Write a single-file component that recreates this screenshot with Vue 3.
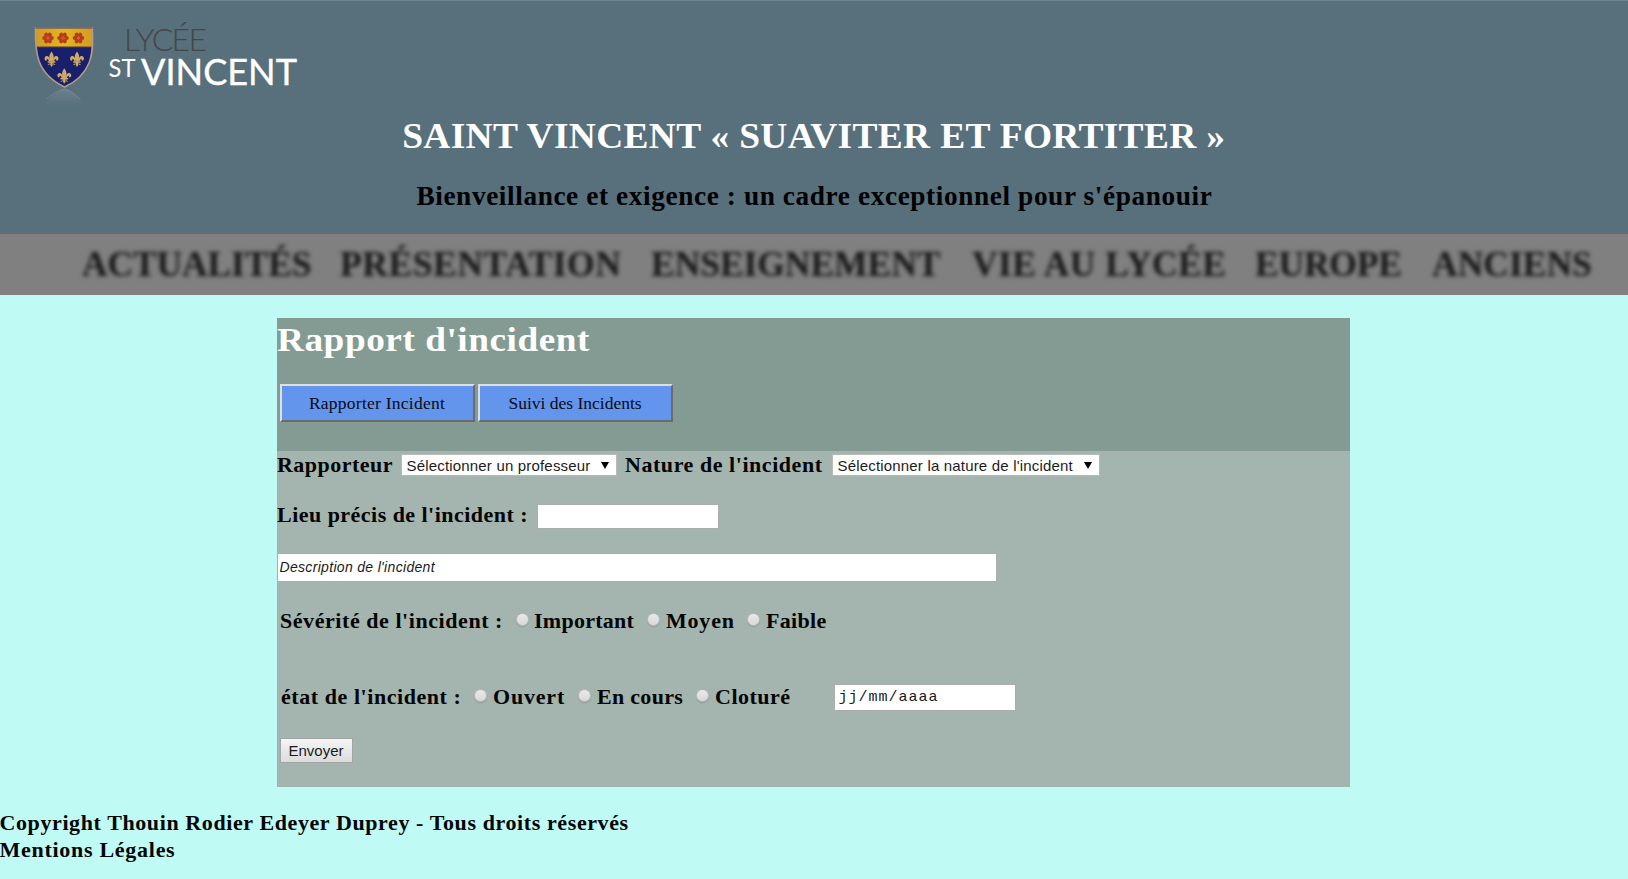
<script setup>
const nav = [
  { label: 'ACTUALITÉS', key: 'actualites' },
  { label: 'PRÉSENTATION', key: 'presentation' },
  { label: 'ENSEIGNEMENT', key: 'enseignement' },
  { label: 'VIE AU LYCÉE', key: 'vie' },
  { label: 'EUROPE', key: 'europe' },
  { label: 'ANCIENS', key: 'anciens' },
]
const flowers = [48, 63, 78.5]
const lilies = [[51.5, 59.5], [77, 59.5], [64.3, 76.3]]
const petals = [0, 60, 120, 180, 240, 300]
</script>

<template>
  <div class="page">
    <header class="header">
      <svg class="logo" width="330" height="115" viewBox="0 0 330 115">
        <defs>
          <linearGradient id="reflection" x1="0" y1="0" x2="0" y2="1">
            <stop offset="0" stop-color="#a9b8c0" stop-opacity=".6" />
            <stop offset="1" stop-color="#a9b8c0" stop-opacity="0" />
          </linearGradient>
          <linearGradient id="gold" x1="0" y1="0" x2="1" y2="0">
            <stop offset="0" stop-color="#d09a22" />
            <stop offset=".5" stop-color="#e2b71f" />
            <stop offset="1" stop-color="#d39a22" />
          </linearGradient>
          <clipPath id="shield">
            <path d="M35.5 28H92.3C93 44 92.8 54 89 63C84 75 76 82 64.5 87C52 81 43 72 39 61C35.8 52 35.2 42 35.5 28Z" />
          </clipPath>
        </defs>
        <path d="M64.5 89C57 91 49 98 43 106H84C79 98 73 91 64.5 89Z" fill="url(#reflection)" opacity=".4" />
        <path d="M47 99C52 94 57 91 64.5 89C71 91 75 94 80 99" fill="none" stroke="#9ba9af" stroke-width="1" opacity=".4" />
        <g clip-path="url(#shield)">
          <rect x="34" y="27" width="60" height="61" fill="#19206b" />
          <rect x="34" y="27" width="60" height="19.5" fill="url(#gold)" />
          <path d="M34 46.7H94" stroke="#9d762e" />
        </g>
        <path d="M35.5 28H92.3C93 44 92.8 54 89 63C84 75 76 82 64.5 87C52 81 43 72 39 61C35.8 52 35.2 42 35.5 28Z" fill="none" stroke="#b59b83" stroke-width="1.6" />
        <path d="M35.5 28H92.3" stroke="#713e29" stroke-width="1.2" />
        <g v-for="x in flowers" :key="x" :transform="`translate(${x} 38)`">
          <ellipse v-for="a in petals" :key="a" cx="0" cy="-3.5" rx="2.1" ry="2.3" :transform="`rotate(${a + 30})`" fill="#b93a20" />
          <circle r="1.4" fill="#cc5a25" />
        </g>
        <g v-for="(p, i) in lilies" :key="i" :transform="`translate(${p[0]} ${p[1]})`" fill="#d0a868">
          <path d="M0 -8C3 -4 2.5 -1 1.2 2H-1.2C-2.5 -1 -3 -4 0 -8Z" />
          <path d="M1 2C1.5 -3 5 -5 6.7 -2C7.6 0 5.8 2 4.6 .8C5.2 -1 3.2 -1 2.6 2ZM-1 2C-1.5 -3 -5 -5 -6.7 -2C-7.6 0 -5.8 2 -4.6 .8C-5.2 -1 -3.2 -1 -2.6 2Z" />
          <path d="M-3.8 1.8H3.8V3.3H-3.8ZM-1 3H1L1.3 5.5L0 7.5L-1.3 5.5ZM1.3 3.2L4.2 5.6L2 5.2ZM-1.3 3.2L-4.2 5.6L-2 5.2Z" />
        </g>
        <text class="lycee" x="124" y="51" textLength="83">LYCÉE</text>
        <text class="st" x="108.5" y="77" textLength="27" lengthAdjust="spacingAndGlyphs">ST</text>
        <text class="vincent" x="141" y="85" textLength="156" lengthAdjust="spacingAndGlyphs">VINCENT</text>
      </svg>
      <h1 class="title">SAINT VINCENT « SUAVITER ET FORTITER »</h1>
      <h2 class="motto">Bienveillance et exigence : un cadre exceptionnel pour s'épanouir</h2>
    </header>

    <nav class="nav">
      <a v-for="n in nav" :key="n.key" :class="n.key">{{ n.label }}</a>
    </nav>

    <main class="panel">
      <section class="panel-head">
        <h1 class="heading">Rapport d'incident</h1>
        <div class="tabs">
          <button class="tab">Rapporter Incident</button>
          <button class="tab second">Suivi des Incidents</button>
        </div>
      </section>
      <form class="form" @submit.prevent>
        <div class="row first">
          <label class="reporter">Rapporteur</label>
          <div class="select teacher"><span>Sélectionner un professeur</span><i class="arrow"></i></div>
          <label class="nature">Nature de l'incident</label>
          <div class="select kind"><span>Sélectionner la nature de l'incident</span><i class="arrow"></i></div>
        </div>
        <div class="row place">
          <label class="place-label">Lieu précis de l'incident :</label>
          <div class="field place-field"></div>
        </div>
        <div class="field description">Description de l'incident</div>
        <div class="row severity">
          <span class="severity-label">Sévérité de l'incident :</span>
          <label class="option important"><i class="radio"></i><span>Important</span></label>
          <label class="option moyen"><i class="radio"></i><span>Moyen</span></label>
          <label class="option faible"><i class="radio"></i><span>Faible</span></label>
        </div>
        <div class="row state">
          <span class="state-label">état de l'incident :</span>
          <label class="option ouvert"><i class="radio"></i><span>Ouvert</span></label>
          <label class="option encours"><i class="radio"></i><span>En cours</span></label>
          <label class="option cloture"><i class="radio"></i><span>Cloturé</span></label>
          <div class="field date">jj/mm/aaaa</div>
        </div>
        <button class="send">Envoyer</button>
      </form>
    </main>

    <footer class="footer">
      <div>Copyright Thouin Rodier Edeyer Duprey - Tous droits réservés</div>
      <div class="legal">Mentions Légales</div>
    </footer>
  </div>
</template>

<style>
body { margin: 0; background: #bffaf4; }
</style>

<style scoped>
.page {
  width: 1628px;
  height: 879px;
  overflow: hidden;
  background: #bffaf4;
  color: #050505;
  font-family: "Liberation Serif", "Times New Roman", serif;
  white-space: nowrap;
}
.page * { box-sizing: border-box; }
h1, h2 { margin: 0; }
.header {
  height: 233.5px;
  background: #586f7c;
  border-top: 1px solid #6d8390;
  display: flex;
  flex-direction: column;
  align-items: center;
}
.logo { display: block; align-self: flex-start; flex: none; height: 115px; margin-top: -1px; }
.lycee { font: 300 32px Lato, sans-serif; fill: #454647; }
.st { font: 400 25.5px Lato, sans-serif; fill: #fff; }
.vincent { font: 400 36.5px Lato, sans-serif; fill: #fff; stroke: #fff; stroke-width: .4px; }
.title { margin-top: 1px; font-size: 36px; line-height: 40px; letter-spacing: .31px; color: #fff; transform: scaleX(1.04); }
.motto { margin-top: 25px; font-size: 26.5px; line-height: 30px; letter-spacing: .58px; color: #000; transform: scaleX(1.03); }
.nav {
  height: 61px;
  padding: 0 0 2px 82px;
  background: #808080;
  border-top: 1px solid #858179;
  display: flex;
  align-items: center;
  font-size: 35.5px;
  font-weight: bold;
  line-height: 40px;
  color: transparent;
  text-shadow: 0 0 4px rgba(0, 0, 0, .82);
}
.nav a { flex: none; }
.actualites { width: 258px; letter-spacing: -.15px; }
.presentation { width: 311px; letter-spacing: .55px; }
.enseignement { width: 321px; letter-spacing: -.05px; }
.vie { width: 283px; letter-spacing: .42px; }
.europe { width: 177px; letter-spacing: -.2px; }
.anciens { letter-spacing: 0; }
.panel { width: 1073px; height: 469px; margin: 23.5px 0 0 277px; background: #a4b4ae; }
.panel-head { height: 133px; background: #839b92; }
.heading {
  height: 41px;
  padding-top: 1px;
  font-size: 34.5px;
  line-height: 41px;
  letter-spacing: .5px;
  color: #fff;
  transform: scaleX(1.08);
  transform-origin: left;
}
.tabs { display: flex; gap: 3px; padding: 25px 0 0 2.5px; }
.tab {
  width: 195px;
  height: 38px;
  padding: 0;
  border: 2px solid;
  border-color: #dfe0de #6b6b6b #6b6b6b #dfe0de;
  background: #6495ed;
  color: #0a0a14;
  font: 17.5px "Liberation Serif", serif;
  letter-spacing: .25px;
}
.tab.second { letter-spacing: 0; }
.row { display: flex; align-items: center; font-size: 22px; font-weight: bold; line-height: 26px; }
.row > * { flex: none; }
.first { height: 28px; }
.reporter { width: 124px; letter-spacing: .48px; }
.select {
  height: 22px;
  border: 1px solid #b9b9b9;
  background: #fff;
  color: #1c1c1c;
  font: 15px/21px "Liberation Sans", Arial, sans-serif;
  letter-spacing: .18px;
  display: flex;
  align-items: center;
  justify-content: space-between;
  padding: 1px 7px 0 4.5px;
}
.arrow { width: 0; height: 0; border: 4px solid transparent; border-top: 7px solid #000; border-bottom: 0; }
.teacher { width: 216px; }
.nature { margin-left: 8px; width: 207px; letter-spacing: .55px; }
.kind { width: 268px; }
.place { height: 26px; margin-top: 24px; }
.place-label { width: 260px; letter-spacing: .47px; position: relative; top: -1px; }
.field { background: #fff; border: 1px solid #a9adab; color: #1a1a1a; }
.place-field { width: 182px; height: 25px; }
.description {
  width: 720px;
  height: 29px;
  margin-top: 24px;
  padding-left: 1.5px;
  font: italic 14px/26px "Liberation Sans", Arial, sans-serif;
  letter-spacing: .32px;
}
.severity { height: 26px; margin-top: 26px; padding-left: 3px; }
.severity-label { width: 236px; letter-spacing: .56px; }
.option { display: flex; align-items: center; gap: 5px; }
.radio {
  width: 13px;
  height: 13px;
  border: 1px solid #b9bbba;
  border-radius: 50%;
  background: linear-gradient(#e9e9e9, #d9d9d9);
  box-shadow: 0 1px 1px #8f9b96;
  position: relative;
  top: -1.5px;
}
.important { width: 131px; letter-spacing: .27px; }
.moyen { width: 100px; gap: 6px; letter-spacing: .8px; }
.faible { gap: 6px; letter-spacing: .3px; }
.state { height: 28px; margin-top: 49px; padding-left: 4px; }
.state-label { width: 193px; letter-spacing: .56px; }
.ouvert { width: 104px; gap: 6px; letter-spacing: .8px; }
.encours { width: 118px; gap: 6px; letter-spacing: .3px; }
.cloture { width: 138px; gap: 6px; letter-spacing: .5px; }
.date { width: 182px; height: 27px; padding-left: 3.5px; font: 15px/25px "Liberation Mono", monospace; letter-spacing: 1px; }
.send {
  display: block;
  width: 73px;
  height: 25px;
  margin: 27px 0 0 2.5px;
  padding: 0;
  border: 1px solid #a3a5a4;
  background: linear-gradient(#f5f5f5, #dcdcdc);
  color: #1a1a1a;
  font: 15px "Liberation Sans", Arial, sans-serif;
}
.footer { margin-top: 22px; font-size: 22px; font-weight: bold; line-height: 27px; letter-spacing: .6px; margin-left: -.5px; }
.legal { letter-spacing: .72px; }
</style>
